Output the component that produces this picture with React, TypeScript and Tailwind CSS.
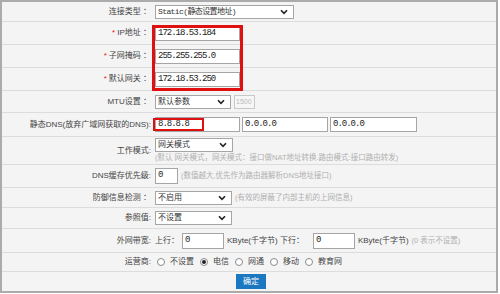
import React from 'react';

const sans = "font-['Liberation_Sans','Noto_Sans_CJK_SC',sans-serif]";
const mono = "font-['Liberation_Mono','Noto_Sans_CJK_SC',monospace]";

function Chevron() {
  return (
    <svg width="8" height="6" viewBox="0 0 8 6" className="absolute right-[5px] top-1/2 -translate-y-1/2">
      <path d="M1 1.2 L4 4.4 L7 1.2" fill="none" stroke="#222" strokeWidth="1.6" />
    </svg>
  );
}

function Select({ text, className }: { text: string; className: string }) {
  return (
    <div className={`relative h-[14px] border border-[#a5a5a5] bg-white pl-[2px] text-[8px] leading-[12px] text-[#333] ${className}`}>
      {text}
      <Chevron />
    </div>
  );
}

function Field({ value, className }: { value: string; className: string }) {
  return (
    <div className={`border border-[#a5a5a5] bg-white pl-[2px] pt-[1px] text-[9px] leading-[10px] tracking-[-1px] text-[#222] ${mono} ${className}`}>
      {value}
    </div>
  );
}

function Row({ label, star, h, last, children }: { label: string; star?: boolean; h: string; last?: boolean; children?: React.ReactNode }) {
  return (
    <div className={`flex items-center ${h} ${last ? '' : 'border-b border-[#dcdcdc]'}`}>
      <div className="w-[152px] shrink-0 pr-[3px] text-right text-[8px] text-[#444]">
        {star && <span className="mr-[2px] text-[#e02020]">*</span>}
        {label}
      </div>
      <div className="flex items-center pl-[1px]">{children}</div>
    </div>
  );
}

function Radio({ label, checked }: { label: string; checked?: boolean }) {
  return (
    <div className="mr-[4px] flex items-center gap-[5px]">
      <span className="ml-[2px] flex h-[8px] w-[8px] items-center justify-center rounded-full border border-[#8a8a8a] bg-white">
        {checked && <span className="h-[4px] w-[4px] rounded-full bg-[#222]" />}
      </span>
      <span className="text-[8px] text-[#444]">{label}</span>
    </div>
  );
}

export default function App() {
  return (
    <div className={`h-[294px] w-[500px] bg-white ${sans}`}>
      <div className="relative w-[498px] border-2 border-[#ababab] bg-[#f4f4f4]">
        <Row label="连接类型 ：" h="h-[20px]">
          <Select text="Static(静态设置地址)" className={`w-[139px] tracking-[-0.6px] ${mono}`} />
        </Row>
        <Row label="IP地址 ：" star h="h-[23px]">
          <Field value="172.18.53.184" className="h-[15px] w-[85px]" />
        </Row>
        <Row label="子网掩码 ：" star h="h-[23px]">
          <Field value="255.255.255.0" className="h-[15px] w-[85px]" />
        </Row>
        <Row label="默认网关 ：" star h="h-[23px]">
          <Field value="172.18.53.250" className="h-[15px] w-[85px]" />
        </Row>
        <Row label="MTU设置 ：" h="h-[22px]">
          <Select text="默认参数" className="w-[76px]" />
          <div className="ml-[3px] h-[14px] w-[21px] border border-[#c8c8c8] bg-[#f6f6f6] pl-[1px] text-[7px] leading-[12px] text-[#bbb]">1500</div>
        </Row>
        <Row label="静态DNS(放弃广域网获取的DNS):" h="h-[24px]">
          <div className="relative">
            <Field value="8.8.8.8" className="h-[15px] w-[85px]" />
            <div className="absolute left-[-2px] top-[1px] h-[13px] w-[51px] border-[2.5px] border-[#e01010]" />
          </div>
          <Field value="0.0.0.0" className="ml-[2px] h-[15px] w-[86px]" />
          <Field value="0.0.0.0" className="ml-[2px] h-[15px] w-[87px]" />
        </Row>
        <Row label="工作模式:" h="h-[28px]">
          <div className="flex flex-col">
            <Select text="网关模式" className="w-[78px]" />
            <div className="mt-[1px] text-[7.5px] leading-[10px] text-[#b0b0b0]">(默认 网关模式，网关模式：接口做NAT地址转换.路由模式:接口路由转发)</div>
          </div>
        </Row>
        <Row label="DNS缓存优先级:" h="h-[23px]">
          <Field value="0" className="h-[16px] w-[23px]" />
          <span className="ml-[3px] text-[7.5px] text-[#b0b0b0]">(数值越大,优先作为路由器解析DNS地址接口)</span>
        </Row>
        <Row label="防御信息检测 ：" h="h-[20px]">
          <Select text="不启用" className="w-[77px]" />
          <span className="ml-[3px] text-[7.5px] text-[#b0b0b0]">(有效的屏蔽了内部主机的上网信息)</span>
        </Row>
        <Row label="参照值:" h="h-[21px]">
          <Select text="不设置" className="w-[77px]" />
        </Row>
        <Row label="外网带宽:" h="h-[24px]">
          <span className="text-[8px] text-[#444]">上行：</span>
          <Field value="0" className="ml-[3px] h-[16px] w-[42px] tracking-normal" />
          <span className="ml-[3px] text-[8px] text-[#444]">KByte(千字节) 下行：</span>
          <Field value="0" className="ml-[9px] h-[16px] w-[42px] tracking-normal" />
          <span className="ml-[3px] text-[8px] text-[#444]">KByte(千字节)</span>
          <span className="ml-[3px] text-[7.5px] text-[#b0b0b0]">(0 表示不设置)</span>
        </Row>
        <Row label="运营商:" h="h-[19px]">
          <Radio label="不设置" />
          <Radio label="电信" checked />
          <Radio label="网通" />
          <Radio label="移动" />
          <Radio label="教育网" />
        </Row>
        <div className="flex h-[19px] items-center justify-center pl-[4px]">
          <button className="h-[15px] w-[30px] bg-[#1b78c0] text-[8px] text-white">确定</button>
        </div>

        <div className="absolute left-[150px] top-[23px] h-[66px] w-[91px] border-[3px] border-[#e01010]" />
      </div>
    </div>
  );
}
